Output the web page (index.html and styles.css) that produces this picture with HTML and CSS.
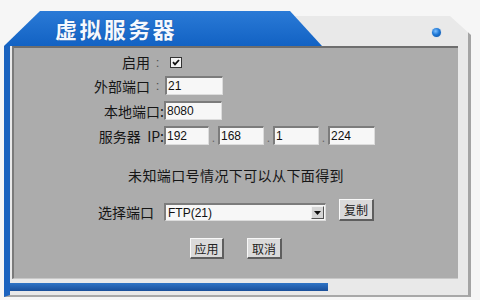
FILE: index.html
```html
<!DOCTYPE html>
<html lang="zh-CN">
<head>
<meta charset="utf-8">
<title>虚拟服务器</title>
<link rel="stylesheet" href="styles.css">
</head>
<body>
<div class="win">
  <div class="head">
    <div class="tab">虚拟服务器</div>
    <div class="head-rest"><span class="dot"></span></div>
  </div>
  <div class="body">
    <div class="panel-wrap">
      <div class="panel">
        <div class="row r1">
          <span class="lbl">启用</span><span class="colon">:</span>
          <span class="check"><svg width="8" height="7" viewBox="0 0 8 7"><path d="M1 3.2 L3 5.4 L7 1" fill="none" stroke="#111" stroke-width="1.8"/></svg></span>
        </div>
        <div class="row">
          <span class="lbl">外部端口</span><span class="colon">:</span>
          <span class="field w58">21</span>
        </div>
        <div class="row">
          <span class="lbl wide">本地端口:</span>
          <span class="field w58">8080</span>
        </div>
        <div class="row">
          <span class="lbl wide">服务器&nbsp;&nbsp;IP:</span>
          <span class="field w45">192</span><span class="sep">.</span>
          <span class="field w46">168</span><span class="sep">.</span>
          <span class="field w46">1</span><span class="sep">.</span>
          <span class="field w47">224</span>
        </div>
        <p class="note">未知端口号情况下可以从下面得到</p>
        <div class="row centered r6">
          <span class="plabel">选择端口</span>
          <span class="select"><span class="sel-text">FTP(21)</span><span class="arrow"><svg width="7" height="4" viewBox="0 0 7 4"><path d="M0 0 H7 L3.5 4 Z" fill="#111"/></svg></span></span>
          <span class="btn copy">复制</span>
        </div>
        <div class="row centered r7">
          <span class="btn">应用</span>
          <span class="btn">取消</span>
        </div>
      </div>
    </div>
    <div class="foot"><span class="bluebar"></span></div>
  </div>
</div>
</body>
</html>
```
FILE: styles.css
```css
html, body {
  margin: 0;
  padding: 0;
  background: #f6f6f6;
  font-family: "Noto Sans CJK SC", "Liberation Sans", sans-serif;
}
.win {
  margin: 11px 0 0 4px;
  width: 467px;
}
.head {
  display: flex;
  height: 35px;
}
.tab {
  position: relative;
  z-index: 1;
  flex: none;
  width: 318px;
  height: 35px;
  box-sizing: border-box;
  padding-left: 51px;
  background: linear-gradient(to bottom, #2a7ad6, #1262c4);
  clip-path: polygon(36px 0, 286px 0, 100% 100%, 0 100%);
  color: #f4f8ff;
  font-size: 22px;
  font-weight: bold;
  letter-spacing: 2.4px;
  line-height: 35px;
  text-shadow: 0 0 1px #0b3f86;
}
.head-rest {
  flex: 1;
  margin-left: -34px;
  margin-top: 5px;
  background: #e9e9e9;
  border-right: 3px solid #a4a4a4;
  clip-path: polygon(0 0, calc(100% - 21px) 0, 100% 19px, 100% 100%, 0 100%);
  display: flex;
  justify-content: flex-end;
  align-items: flex-start;
  padding: 12px 27px 0 0;
}
.dot {
  width: 9px;
  height: 9px;
  border-radius: 50%;
  background: radial-gradient(circle at 40% 35%, #7fc0ff 0, #1e78d6 45%, #0b4a9a 100%);
  box-shadow: 0 0 1px #6aa8e8;
}
.body {
  background: #e9e9e9;
  border-left: 6px solid #1b63bf;
  border-right: 3px solid #a4a4a4;
  border-bottom: 2px solid #a8a8a8;
}
.panel-wrap {
  padding-right: 10px;
}
.panel {
  height: 233px;
  box-sizing: border-box;
  margin-left: 2px;
  background: #acacac;
  border-top: 2px solid #6e6e6e;
  border-left: 2px solid #7a7a7a;
  border-bottom: 1px solid #c8c8c8;
  padding-top: 3px;
  font-size: 14px;
  color: #161616;
}
.row {
  display: flex;
  align-items: center;
  height: 25px;
}
.r1 {
  height: 22px;
}
.lbl {
  width: 136px;
  text-align: right;
  line-height: 20px;
}
.lbl.wide {
  width: 150px;
  font-size: 14px;
}
.colon {
  width: 15px;
  text-align: center;
  color: #505050;
  font-family: "Liberation Sans", sans-serif;
  font-size: 13px;
}
.check {
  margin-left: 5px;
  width: 8px;
  height: 7px;
  padding: 1px;
  background: #f4f4f4;
  border: 1px solid #333;
  display: flex;
  align-items: center;
  justify-content: center;
}
.check svg {
  display: block;
}
.field {
  height: 19px;
  box-sizing: border-box;
  background: #f7f7f7;
  border-top: 2px solid #7c7c7c;
  border-left: 2px solid #7c7c7c;
  border-right: 1px solid #dcdcdc;
  border-bottom: 1px solid #dcdcdc;
  font-family: "Liberation Sans", sans-serif;
  font-size: 12px;
  line-height: 16px;
  padding-left: 1px;
  color: #111;
}
.w58 { width: 58px; }
.w45 { width: 45px; }
.w46 { width: 46px; }
.w47 { width: 47px; }
.sep {
  width: 9px;
  align-self: flex-end;
  text-align: center;
  font-family: "Liberation Sans", sans-serif;
  font-size: 12px;
  line-height: 20px;
  color: #666;
}
.note {
  margin: 17px 0 0;
  text-align: center;
  line-height: 20px;
  font-size: 14px;
  letter-spacing: 0.4px;
}
.centered {
  justify-content: center;
}
.r6 {
  margin-top: 14px;
  height: 22px;
  align-items: flex-end;
}
.plabel {
  line-height: 18px;
  margin-right: 10px;
}
.select {
  width: 162px;
  height: 18px;
  box-sizing: border-box;
  display: flex;
  align-items: center;
  background: #f7f7f7;
  border-top: 2px solid #7c7c7c;
  border-left: 2px solid #7c7c7c;
  border-right: 1px solid #dcdcdc;
  border-bottom: 1px solid #dcdcdc;
  margin-right: 13px;
}
.sel-text {
  flex: 1;
  font-family: "Liberation Sans", sans-serif;
  font-size: 12px;
  padding-left: 2px;
  color: #111;
}
.arrow {
  width: 13px;
  height: 13px;
  box-sizing: border-box;
  margin-right: 1px;
  background: #d6d6d6;
  border-top: 1px solid #f2f2f2;
  border-left: 1px solid #f2f2f2;
  border-right: 1px solid #555;
  border-bottom: 1px solid #555;
  display: flex;
  align-items: center;
  justify-content: center;
}
.arrow svg {
  display: block;
}
.btn {
  height: 22px;
  box-sizing: border-box;
  display: flex;
  align-items: center;
  justify-content: center;
  background: #dadada;
  border-top: 1px solid #f8f8f8;
  border-left: 1px solid #f8f8f8;
  border-right: 2px solid #5e5e5e;
  border-bottom: 2px solid #5e5e5e;
  font-size: 12px;
  color: #222;
}
.copy {
  width: 35px;
}
.r7 {
  margin-top: 17px;
  height: 21px;
  gap: 23px;
}
.r7 .btn {
  width: 34px;
  height: 21px;
}
.r7 .btn + .btn {
  width: 35px;
}
.foot {
  height: 16px;
  box-sizing: border-box;
  padding-top: 4px;
}
.bluebar {
  display: block;
  width: 318px;
  height: 8px;
  background: linear-gradient(to bottom, #2f74c6, #1a4f9a);
}
```
